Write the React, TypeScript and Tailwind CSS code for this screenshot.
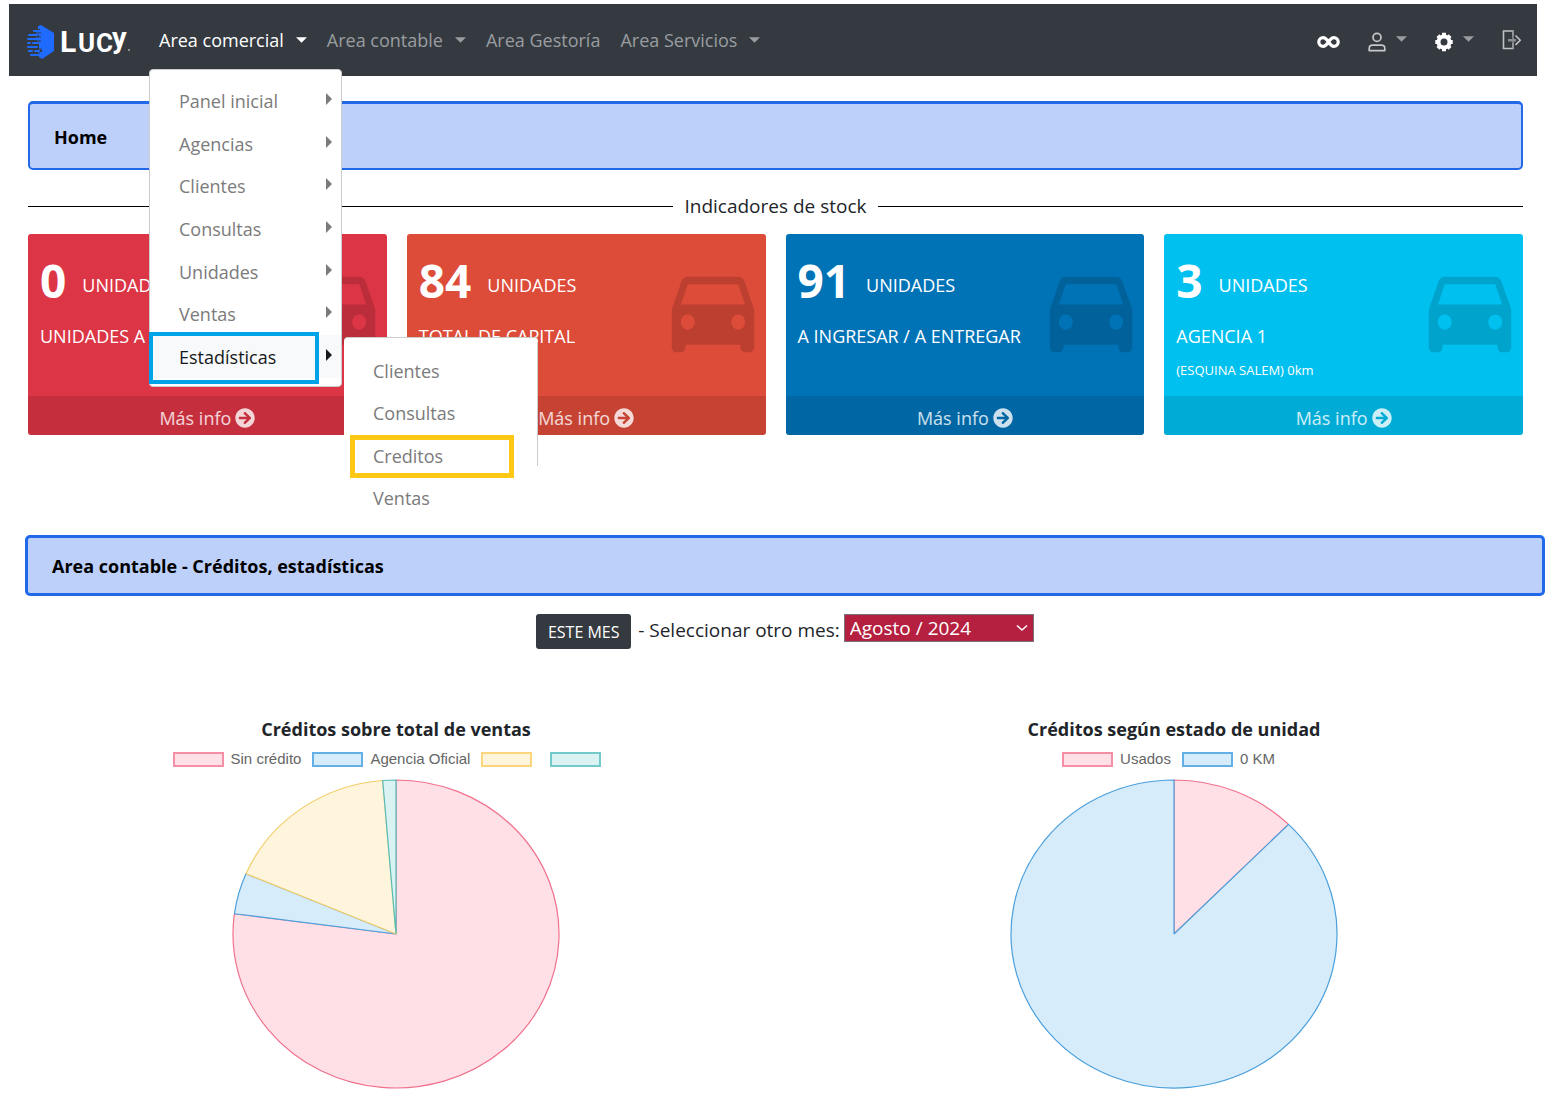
import { FaArrowCircleRight } from 'react-icons/fa'
import { IoMdCar } from 'react-icons/io'

type Slice = { label: string; value: number; fill: string; stroke: string; swatch: string }

const NAV_ITEMS = [
  { label: 'Area contable', caret: true },
  { label: 'Area Gestoría', caret: false },
  { label: 'Area Servicios', caret: true },
]

const MENU = ['Panel inicial', 'Agencias', 'Clientes', 'Consultas', 'Unidades', 'Ventas']

const CARDS = [
  { count: 0, title: 'UNIDADES A', note: '', bg: 'bg-[#dc3545]' },
  { count: 84, title: 'TOTAL DE CAPITAL', note: '', bg: 'bg-[#dd4b39]' },
  { count: 91, title: 'A INGRESAR / A ENTREGAR', note: '', bg: 'bg-[#0073b7]' },
  { count: 3, title: 'AGENCIA 1', note: '(ESQUINA SALEM) 0km', bg: 'bg-[#00c0ef]' },
]

const PINK = { fill: '#ffe0e6', stroke: '#f0708c', swatch: 'bg-[#ffe0e6] border-[#f48fa6]' }
const BLUE = { fill: '#d7ecfb', stroke: '#4a9fdc', swatch: 'bg-[#d7ecfb] border-[#62b0e6]' }
const YELLOW = { fill: '#fff5dd', stroke: '#f2cd68', swatch: 'bg-[#fff5dd] border-[#fbd67c]' }
const TEAL = { fill: '#dbf2f2', stroke: '#55bdb8', swatch: 'bg-[#dbf2f2] border-[#72caca]' }

const VENTAS: Slice[] = [
  { label: 'Sin crédito', value: 77.1, ...PINK },
  { label: 'Agencia Oficial', value: 4.3, ...BLUE },
  { label: '', value: 17.3, ...YELLOW },
  { label: '', value: 1.3, ...TEAL },
]

const ESTADO: Slice[] = [
  { label: 'Usados', value: 12.4, ...PINK },
  { label: '0 KM', value: 87.6, ...BLUE },
]

function Caret({ className = '' }: { className?: string }) {
  return (
    <svg className={`w-[11px] h-1.5 ${className}`} viewBox="0 0 12 6" fill="currentColor" aria-hidden="true">
      <path d="M0 0h12L6 6z" />
    </svg>
  )
}

function SideCaret() {
  return (
    <svg className="w-1.5 h-3 mb-1" viewBox="0 0 6 12" fill="currentColor" aria-hidden="true">
      <path d="M0 0l6 6-6 6z" />
    </svg>
  )
}

function Logo() {
  return (
    <svg className="w-[104px] h-12" viewBox="0 -6 104 48" role="img" aria-label="Lucy">
      <path fill="#1f6bff" d="M14 3l13 8v18L15 37l-3-2v-2h-1v-3h4v-2h-3v-9H9v-4h3v-2H9v-3h4V7h-2V4z" />
      <g stroke="#1f6bff" strokeWidth="2" strokeLinecap="round">
        <path d="M7 9h6M2 13h8M1 17h9M6 21h6M1 21h2M1 25h9M2 29h3M8 29h4M4 33h7" />
      </g>
      <g stroke="#343a40" strokeWidth="1">
        <path d="M3 15h11M4 19h10M3 23h8M3 27h12M8 31h5M9 11h5" />
      </g>
      <g fill="#fff" fontFamily="Roboto, sans-serif" fontWeight="700">
        <text x="33" y="30" fontSize="30">L</text>
        <text x="51" y="30" fontSize="26">U</text>
        <text x="69" y="30" fontSize="26">C</text>
        <text x="85" y="26" fontSize="29">y</text>
      </g>
      <circle cx="102" cy="28" r="1" fill="#aaa" />
    </svg>
  )
}

function InfinityIcon() {
  return (
    <svg className="w-[23px] h-3.5" viewBox="0 0 23 14" fill="none" stroke="currentColor" strokeWidth="3.2" aria-hidden="true">
      <path d="M11.5 7C9.6 4.2 8.2 2.6 6.2 2.6a4.4 4.4 0 0 0 0 8.8c2 0 3.4-1.6 5.3-4.4s3.300-4.400 5.300-4.400a4.400 4.400 0 0 1 0 8.800c-2 0-3.400-1.600-5.300-4.400z" />
    </svg>
  )
}

function UserIcon() {
  return (
    <svg className="w-[18px] h-5" viewBox="0 0 18 20" fill="none" stroke="#c5c8ca" strokeWidth="1.7" aria-hidden="true">
      <circle cx="9" cy="5.4" r="4" />
      <path d="M1.2 18.6v-2.2c0-2 1.6-3.2 3.6-3.2h8.4c2 0 3.6 1.2 3.6 3.2v2.2z" strokeLinejoin="round" />
    </svg>
  )
}

function GearIcon() {
  return (
    <svg className="w-[18px] h-5" viewBox="0 0 18 20" aria-hidden="true">
      <circle cx="9" cy="10" r="5.5" fill="none" stroke="#fff" strokeWidth="4" />
      <path
        d="M9 .8v3M9 16.2v3M.3 10h3M14.7 10h3M2.9 3.700L5 5.800M13 14.200l2.100 2.100M2.900 16.300L5 14.200M13 5.800l2.100-2.100"
        stroke="#fff"
        strokeWidth="4"
      />
    </svg>
  )
}

function ExitIcon() {
  return (
    <svg className="w-5 h-5" viewBox="0 0 20 20" fill="none" stroke="#bfc2c4" strokeWidth="1.6" aria-hidden="true">
      <path d="M11 6V1H1.500v17.500H11V13" />
      <path d="M11 1v17.500" stroke="#8b8f93" />
      <path d="M6 9h8v2.500H6z" fill="#8b8f93" stroke="none" />
      <path d="M13.500 5.500l4.700 4.700-4.700 4.700" />
    </svg>
  )
}

function Pie({ slices, label }: { slices: Slice[]; label: string }) {
  const rx = 163
  const ry = 154
  const point = (pct: number) => {
    const a = (pct / 100) * Math.PI * 2
    return `${165 + rx * Math.sin(a)} ${155 - ry * Math.cos(a)}`
  }
  let total = 0
  return (
    <svg className="w-[330px] h-[310px]" viewBox="0 0 330 310" role="img" aria-label={label}>
      {slices.map((s, i) => {
        const from = total
        total += s.value
        return (
          <path
            key={i}
            d={`M165 155L${point(from)}A${rx} ${ry} 0 ${s.value > 50 ? 1 : 0} 1 ${point(total)}Z`}
            fill={s.fill}
            stroke={s.stroke}
            strokeWidth="1.2"
            strokeLinejoin="bevel"
          />
        )
      })}
    </svg>
  )
}

function Chart({ title, slices }: { title: string; slices: Slice[] }) {
  return (
    <section className="flex flex-col items-center">
      <h3 className="text-lg leading-7 font-bold">{title}</h3>
      <ul className="flex h-5 mt-1.5 mb-2.5 items-center font-['Liberation_Sans',Arial,sans-serif] text-[15px] leading-5 text-[#666]">
        {slices.map((s, i) => (
          <li key={i} className="flex items-center gap-[7px] pr-[11px]">
            <span className={`w-[51px] h-[15px] border-2 ${s.swatch}`} />
            <span>{s.label}</span>
          </li>
        ))}
      </ul>
      <Pie slices={slices} label={title} />
    </section>
  )
}

function Submenu() {
  return (
    <div className="absolute left-[194px] top-[267px] w-[194px] h-[188px] pt-3 pb-1.5 bg-white border-t border-[#ccc] rounded-t flex flex-col">
      <span className="absolute right-0 top-1 w-px h-[124px] bg-[#ccc]" />
      {['Clientes', 'Consultas', 'Creditos', 'Ventas'].map((label) => (
        <a key={label} href="#" className="relative flex flex-1 items-center pl-[29px] text-[#7b7b7b]">
          {label}
          {label === 'Creditos' && (
            <span className="absolute left-1.5 top-0 w-[164px] h-[43px] border-[5px] border-[#ffc814]" />
          )}
        </a>
      ))}
    </div>
  )
}

function Dropdown() {
  return (
    <div className="absolute z-10 left-[-10px] top-[65px] w-[193px] h-[318px] pt-2.5 pb-2 bg-white border border-[#ccc] rounded text-lg leading-6 flex flex-col">
      {MENU.map((label) => (
        <a key={label} href="#" className="flex flex-1 items-center justify-between pl-[29px] pr-[9px] text-[#7b7b7b]">
          {label}
          <SideCaret />
        </a>
      ))}
      <a href="#" className="relative flex flex-1 items-center justify-between pl-[29px] pr-[9px] bg-[#f8f9fa] text-[#16181b]">
        Estadísticas
        <SideCaret />
        <span className="absolute left-[-1px] top-[-3px] w-[170px] h-[52px] border-4 border-[#00a2e8]" />
      </a>
      <Submenu />
    </div>
  )
}

export default function App() {
  return (
    <div className="min-h-screen bg-white pt-1 font-['Open_Sans','Noto_Sans',sans-serif] text-lg text-[#212529]">
      <nav className="ml-[9px] mr-[15px] h-[72px] pl-[18px] pr-[15px] flex items-center bg-[#343a40] leading-6 text-[#9a9da0]">
        <a href="#" className="mr-7">
          <Logo />
        </a>
        <div className="relative h-full flex items-center mr-5">
          <button className="flex items-center gap-3 text-white whitespace-nowrap">
            Area comercial
            <Caret />
          </button>
          <Dropdown />
        </div>
        <div className="flex items-center gap-5">
          {NAV_ITEMS.map(({ label, caret }) => (
            <button key={label} className="flex items-center gap-3 whitespace-nowrap">
              {label}
              {caret && <Caret />}
            </button>
          ))}
        </div>
        <div className="ml-auto flex items-center">
          <button aria-label="Integraciones" className="mr-7 pt-1 text-white">
            <InfinityIcon />
          </button>
          <button aria-label="Usuario" className="mr-7 pt-1 flex items-center gap-2.5">
            <UserIcon />
            <Caret className="mb-1.5" />
          </button>
          <button aria-label="Configuración" className="mr-7 pt-1 flex items-center gap-2.5">
            <GearIcon />
            <Caret className="mb-1.5" />
          </button>
          <button aria-label="Salir">
            <ExitIcon />
          </button>
        </div>
      </nav>

      <main>
        <div className="ml-7 mr-[29px] pt-[25px]">
          <h1 className="h-[69px] px-6 pt-0.5 flex items-center bg-[#bcd0fa] border-2 border-t-3 border-[#2269ea] rounded-[5px] text-lg font-bold text-black">
            Home
          </h1>

          <div className="mt-[22px] h-7 flex items-center gap-[11px]">
            <span className="flex-1 h-px bg-black" />
            <h2 className="text-[19px] leading-7">Indicadores de stock</h2>
            <span className="flex-1 h-px bg-black" />
          </div>

          <div className="mt-3.5 grid grid-cols-4 gap-5">
            {CARDS.map((card) => (
              <article key={card.title} className={`relative h-[201px] flex flex-col rounded-[3px] overflow-hidden text-white ${card.bg}`}>
                <IoMdCar preserveAspectRatio="none" className="absolute right-[-2px] top-5 w-[110px] h-[121px] text-black/15" />
                <div className="relative flex-1 pl-3 pt-4">
                  <p className="flex items-center gap-4">
                    <strong className="text-[46px] leading-[60px] font-bold">{card.count}</strong>
                    <span className="pt-2.5 leading-6">UNIDADES</span>
                  </p>
                  <p className="mt-3 leading-7">{card.title}</p>
                  {card.note && <p className="mt-2.5 text-[13px] leading-5">{card.note}</p>}
                </div>
                <a href="#" className="relative h-[39px] pt-1 flex items-center justify-center gap-1 bg-black/10 text-white/80 leading-6">
                  Más info
                  <FaArrowCircleRight className="w-5 h-5" />
                </a>
              </article>
            ))}
          </div>
        </div>

        <div className="ml-[25px] mr-[7px] mt-[100px]">
          <h2 className="h-[61px] px-6 flex items-center bg-[#bcd0fa] border-[3px] border-[#2269ea] rounded-[5px] text-lg font-bold text-black">
            Area contable - Créditos, estadísticas
          </h2>

          <div className="mt-[18px] flex items-start justify-center text-[19px]">
            <button className="h-[35px] w-[95px] rounded-[3px] bg-[#343a40] text-base text-white">ESTE MES</button>
            <label htmlFor="mes" className="ml-[7px] mr-1 leading-8">
              - Seleccionar otro mes:
            </label>
            <div className="relative">
              <select
                id="mes"
                className="block w-[190px] h-7 pl-[5px] appearance-none bg-[#b51f40] border border-[#767676] text-[19px] leading-6 text-white"
              >
                <option>Agosto / 2024</option>
              </select>
              <svg className="absolute right-1.5 top-2.5 w-3 h-2 pointer-events-none" viewBox="0 0 12 8" fill="none" stroke="#fff" strokeWidth="1.6">
                <path d="M1 1.5l5 4.500 5-4.500" />
              </svg>
            </div>
          </div>

          <div className="mt-[66px] grid grid-cols-2 gap-9">
            <Chart title="Créditos sobre total de ventas" slices={VENTAS} />
            <Chart title="Créditos según estado de unidad" slices={ESTADO} />
          </div>
        </div>
      </main>
    </div>
  )
}
